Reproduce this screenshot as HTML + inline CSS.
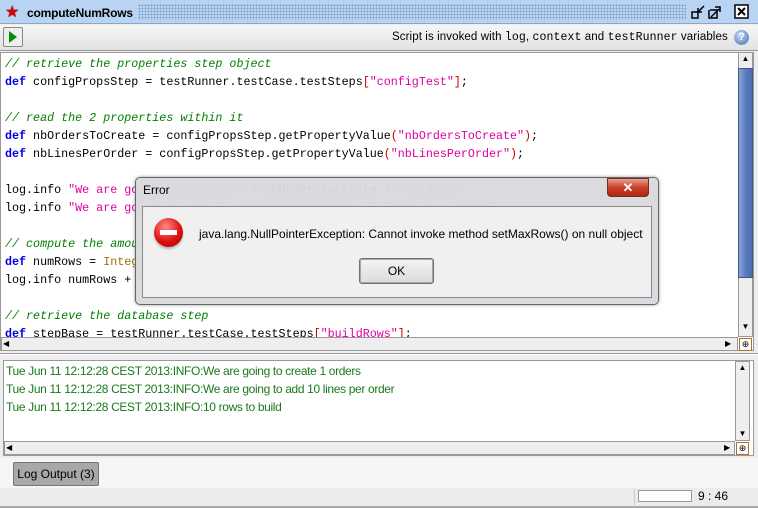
<!DOCTYPE html>
<html><head><style>
*{margin:0;padding:0;box-sizing:border-box}
body{width:758px;height:508px;overflow:hidden;background:#eeeeee;font-family:"Liberation Sans",sans-serif;position:relative}
.a{position:absolute}
.code{font-family:"Liberation Mono",monospace;font-size:11.7px;line-height:18px;white-space:pre;color:#000}
.c{color:#008000;font-style:italic}.k{color:#0000e0;font-weight:bold}.s{color:#e000a0}.o{color:#c00}.t{color:#a07000}
.sb{background:#eee;border:1px solid #999}
.arr{font-size:8px;color:#000;text-align:center}
</style></head><body>
<!-- title bar -->
<div class="a" style="left:0;top:0;width:758px;height:24px;background:#b9d3f3;border-bottom:1px solid #8da6c4"></div>
<div class="a" style="left:138px;top:4px;width:548px;height:16px;background-image:radial-gradient(#7f9fc8 0.9px,transparent 1px);background-size:3px 3px"></div>
<div class="a" style="left:5px;top:2px;font-size:16px;color:#d00;text-shadow:0 0 1px #000">★</div>
<div class="a" style="left:27px;top:6px;font-size:12px;font-weight:bold;color:#000;letter-spacing:-0.2px">computeNumRows</div>
<svg class="a" style="left:690px;top:4px" width="60" height="16"><path d="M2 8h6v6H2z M8 8l6-6 M8 4v4h4" fill="none" stroke="#000" stroke-width="1.5"/><path d="M20 6h7v8h-8V6 M21 13l8-8 M25 3h5v5" fill="none" stroke="#000" stroke-width="1.5"/><rect x="45" y="1" width="13" height="13" fill="#fff" stroke="#000" stroke-width="1.5"/><path d="M48 4l7 7M55 4l-7 7" stroke="#000" stroke-width="2"/></svg>
<!-- toolbar -->
<div class="a" style="left:0;top:25px;width:758px;height:26px;background:linear-gradient(#f6f6f6,#e2e2e2);border-bottom:1px solid #999"></div>
<div class="a" style="left:3px;top:27px;width:20px;height:20px;border:1px solid #888;border-radius:2px;background:#eee"></div>
<svg class="a" style="left:8px;top:31px" width="10" height="12"><path d="M1 0L9 6L1 12Z" fill="#0a8a0a"/></svg>
<div class="a" style="left:392px;top:31px;font-size:11.5px;color:#000;letter-spacing:0.1px">Script is invoked with <span style="font-family:'Liberation Mono',monospace">log</span>, <span style="font-family:'Liberation Mono',monospace">context</span> and <span style="font-family:'Liberation Mono',monospace">testRunner</span> variables</div>
<div class="a" style="left:734px;top:30px;width:15px;height:15px;border-radius:50%;background:radial-gradient(circle at 40% 35%,#c8dbf4,#3d6bb0);color:#fff;font-size:11px;font-weight:bold;text-align:center;line-height:15px">?</div>
<!-- editor -->
<div class="a" style="left:0;top:52px;width:754px;height:299px;background:#fff;border:1px solid #999"></div>
<div class="a code" style="left:5px;top:55px;width:732px;height:282px;overflow:hidden"><span class="c">// retrieve the properties step object</span>
<span class="k">def</span> configPropsStep = testRunner.testCase.testSteps<span class="o">[</span><span class="s">"configTest"</span><span class="o">]</span>;

<span class="c">// read the 2 properties within it</span>
<span class="k">def</span> nbOrdersToCreate = configPropsStep.getPropertyValue<span class="o">(</span><span class="s">"nbOrdersToCreate"</span><span class="o">)</span>;
<span class="k">def</span> nbLinesPerOrder = configPropsStep.getPropertyValue<span class="o">(</span><span class="s">"nbLinesPerOrder"</span><span class="o">)</span>;

log.info <span class="s">"We are going to create "</span> + nbOrdersToCreate + <span class="s">" orders"</span>
log.info <span class="s">"We are going to add "</span> + nbLinesPerOrder + <span class="s">" lines per order"</span>

<span class="c">// compute the amount of rows</span>
<span class="k">def</span> numRows = <span class="t">Integer</span>.parseInt(nbOrdersToCreate)
log.info numRows + <span class="s">" rows to build"</span>

<span class="c">// retrieve the database step</span>
<span class="k">def</span> stepBase = testRunner.testCase.testSteps<span class="o">[</span><span class="s">"buildRows"</span><span class="o">]</span>;</div>
<!-- vscroll -->
<div class="a sb" style="left:738px;top:52px;width:15px;height:285px"></div>
<div class="a arr" style="left:739px;top:54px;width:13px">▲</div>
<div class="a" style="left:738px;top:68px;width:15px;height:210px;background:linear-gradient(90deg,#8aa6d6,#5a7cbc 50%,#4c6cac);border:1px solid #3d5a96"></div>
<div class="a arr" style="left:739px;top:322px;width:13px">▼</div>
<!-- hscroll -->
<div class="a sb" style="left:1px;top:337px;width:737px;height:14px"></div>
<div class="a arr" style="left:3px;top:339px">◀</div>
<div class="a arr" style="left:725px;top:339px">▶</div>
<div class="a" style="left:739px;top:338px;width:13px;height:13px;border:1px solid #b07030;background:#fff;font-size:9px;text-align:center;line-height:11px">⊕</div>
<div class="a" style="left:0;top:353px;width:758px;height:2px;border-top:1px solid #999;border-bottom:1px solid #fff"></div>
<!-- log -->
<div class="a" style="left:3px;top:360px;width:751px;height:96px;background:#fff;border:1px solid #999"></div>
<div class="a" style="left:6px;top:362px;font-size:12px;letter-spacing:-0.35px;line-height:18px;color:#1a7a1a;white-space:pre">Tue Jun 11 12:12:28 CEST 2013:INFO:We are going to create 1 orders
Tue Jun 11 12:12:28 CEST 2013:INFO:We are going to add 10 lines per order
Tue Jun 11 12:12:28 CEST 2013:INFO:10 rows to build</div>
<div class="a sb" style="left:735px;top:361px;width:15px;height:80px"></div>
<div class="a arr" style="left:736px;top:363px;width:13px">▲</div>
<div class="a arr" style="left:736px;top:429px;width:13px">▼</div>
<div class="a sb" style="left:4px;top:441px;width:731px;height:14px"></div>
<div class="a arr" style="left:6px;top:443px">◀</div>
<div class="a arr" style="left:724px;top:443px">▶</div>
<div class="a" style="left:736px;top:442px;width:13px;height:13px;border:1px solid #b07030;background:#fff;font-size:9px;text-align:center;line-height:11px">⊕</div>
<!-- tab -->
<div class="a" style="left:0;top:458px;width:758px;height:30px;background:#f6f6f6"></div>
<div class="a" style="left:13px;top:462px;width:86px;height:24px;background:#a8a8a8;border:1px solid #777;border-radius:2px;font-size:12px;line-height:22px;text-align:center;color:#000">Log Output (3)</div>
<!-- status -->
<div class="a" style="left:0;top:488px;width:758px;height:20px;background:#ececec;border-bottom:2px solid #aaa"></div>
<div class="a" style="left:634px;top:489px;width:1px;height:18px;background:#ccc"></div>
<div class="a" style="left:638px;top:490px;width:54px;height:12px;border:1px solid #999;background:#fff"></div>
<div class="a" style="left:698px;top:489px;font-size:12px">9 : 46</div>
<!-- dialog -->
<div class="a" style="left:135px;top:177px;width:524px;height:128px;background:rgba(218,218,222,0.97);border:1px solid #666;border-radius:5px;box-shadow:0 0 3px rgba(0,0,0,.4)"></div>
<div class="a" style="left:143px;top:183px;font-size:12px;color:#000">Error</div>
<div class="a" style="left:607px;top:178px;width:42px;height:19px;border-radius:0 0 4px 4px;background:linear-gradient(#e8a090,#c8402a 50%,#b02810);border:1px solid #703020;color:#fff;font-size:13px;font-weight:bold;text-align:center;line-height:17px">✕</div>
<div class="a" style="left:142px;top:206px;width:510px;height:92px;background:#f0f0f0;border:1px solid #888"></div>
<div class="a" style="left:154px;top:218px;width:29px;height:29px;border-radius:50%;background:radial-gradient(circle at 40% 30%,#ff8a8a,#e01010 55%,#a00000);box-shadow:0 2px 2px rgba(0,0,0,.25)"></div>
<div class="a" style="left:160px;top:230px;width:17px;height:5px;background:#fff"></div>
<div class="a" style="left:199px;top:227px;font-size:12px;color:#000">java.lang.NullPointerException: Cannot invoke method setMaxRows() on null object</div>
<div class="a" style="left:359px;top:258px;width:75px;height:26px;border:1px solid #707070;border-radius:3px;background:linear-gradient(#f4f4f4,#dcdcdc);font-size:12px;text-align:center;line-height:24px;box-shadow:inset 0 0 0 1px #9ab">OK</div>
</body></html>
